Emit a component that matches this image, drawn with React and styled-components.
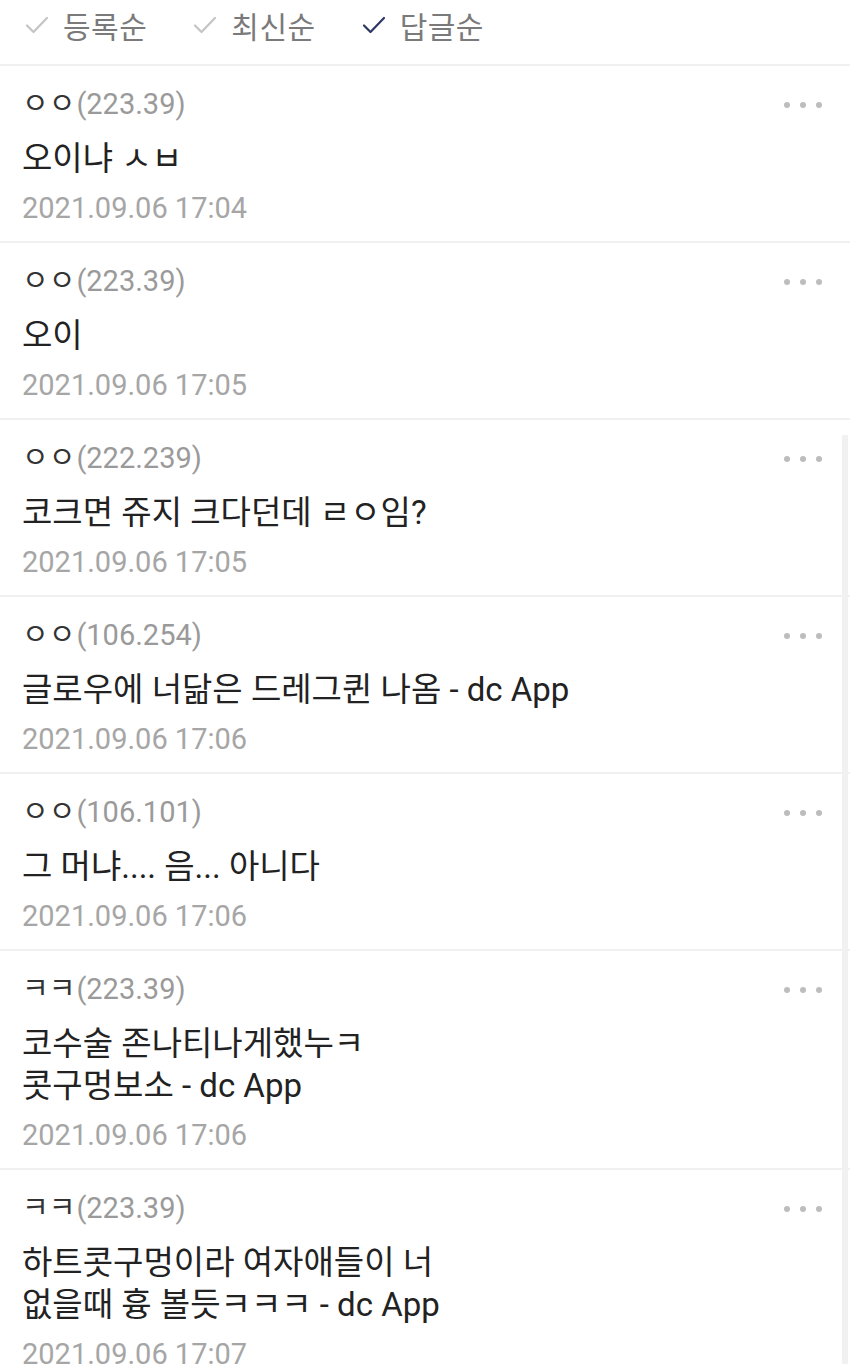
import React from 'react';
import styled, { createGlobalStyle } from 'styled-components';

const comments = [
  { name: 'ㅇㅇ', ip: '223.39', lines: ['오이냐 ㅅㅂ'], date: '2021.09.06 17:04' },
  { name: 'ㅇㅇ', ip: '223.39', lines: ['오이'], date: '2021.09.06 17:05' },
  { name: 'ㅇㅇ', ip: '222.239', lines: ['코크면 쥬지 크다던데 ㄹㅇ임?'], date: '2021.09.06 17:05' },
  { name: 'ㅇㅇ', ip: '106.254', lines: ['글로우에 너닮은 드레그퀸 나옴 - dc App'], date: '2021.09.06 17:06' },
  { name: 'ㅇㅇ', ip: '106.101', lines: ['그 머냐.... 음... 아니다'], date: '2021.09.06 17:06' },
  { name: 'ㅋㅋ', ip: '223.39', lines: ['코수술 존나티나게했누ㅋ', '콧구멍보소 - dc App'], date: '2021.09.06 17:06' },
  { name: 'ㅋㅋ', ip: '223.39', lines: ['하트콧구멍이라 여자애들이 너', '없을때 흉 볼듯ㅋㅋㅋ - dc App'], date: '2021.09.06 17:07' },
];

const sorts = [
  { label: '등록순', on: false },
  { label: '최신순', on: false },
  { label: '답글순', on: true },
];

const Global = createGlobalStyle`
  html, body { margin: 0; padding: 0; background: #fff; }
  body {
    font-family: Roboto, "Noto Sans CJK KR", sans-serif;
    overflow: hidden;
  }
`;

const Check = ({ on }) => (
  <svg width="24" height="20" viewBox="0 0 24 20" fill="none">
    <path
      d="M2 10.5 L8.5 17 L22 3"
      stroke={on ? '#2d3766' : '#c4c4c4'}
      strokeWidth="2.2"
      strokeLinecap="round"
      strokeLinejoin="round"
    />
  </svg>
);

const App = () => {
  return (
    <Page>
      <Global />
      <SortBar>
        {sorts.map((s) => (
          <SortItem key={s.label}>
            <Check on={s.on} />
            <SortLabel>{s.label}</SortLabel>
          </SortItem>
        ))}
      </SortBar>
      <List>
        {comments.map((c, i) => (
          <Row key={i}>
            <Head>
              <Name>
                {c.name}
                <Ip>({c.ip})</Ip>
              </Name>
              <More>
                <Dot />
                <Dot />
                <Dot />
              </More>
            </Head>
            <Body>
              {c.lines.map((l, j) => (
                <div key={j}>{l}</div>
              ))}
            </Body>
            <Date>{c.date}</Date>
          </Row>
        ))}
        <ScrollTrack />
      </List>
    </Page>
  );
};

const Page = styled.div`
  width: 850px;
  height: 1364px;
  overflow: hidden;
  background: #fff;
`;

const SortBar = styled.div`
  height: 66px;
  display: flex;
  align-items: center;
  gap: 46px;
  padding: 0 0 15px 25px;
  box-sizing: border-box;
  border-bottom: 2px solid #f0f0f0;
`;

const SortItem = styled.div`
  display: flex;
  align-items: center;
  gap: 14px;
`;

const SortLabel = styled.span`
  font-size: 30px;
  color: #7a7a7a;
  letter-spacing: 0.5px;
`;

const List = styled.div`
  position: relative;
`;

const Row = styled.div`
  padding: 18px 28px 15px 22px;
  border-bottom: 2px solid #f0f0f0;
`;

const Head = styled.div`
  display: flex;
  align-items: center;
  justify-content: space-between;
  height: 40px;
`;

const Name = styled.div`
  font-size: 29px;
  color: #333;
  line-height: 40px;
`;

const Ip = styled.span`
  color: #9a9a9a;
  margin-left: 1px;
`;

const More = styled.div`
  display: flex;
  gap: 10px;
  padding-top: 2px;
`;

const Dot = styled.span`
  width: 6px;
  height: 6px;
  border-radius: 50%;
  background: #bdbdbd;
`;

const Body = styled.div`
  margin-top: 14px;
  font-size: 33px;
  line-height: 42px;
  color: #222;
`;

const Date = styled.div`
  margin-top: 10px;
  font-size: 29px;
  line-height: 36px;
  color: #a6a6a6;
`;

const ScrollTrack = styled.div`
  position: absolute;
  right: 2px;
  top: 369px;
  width: 6px;
  bottom: -200px;
  background: #f1f1f1;
`;

export default App;
